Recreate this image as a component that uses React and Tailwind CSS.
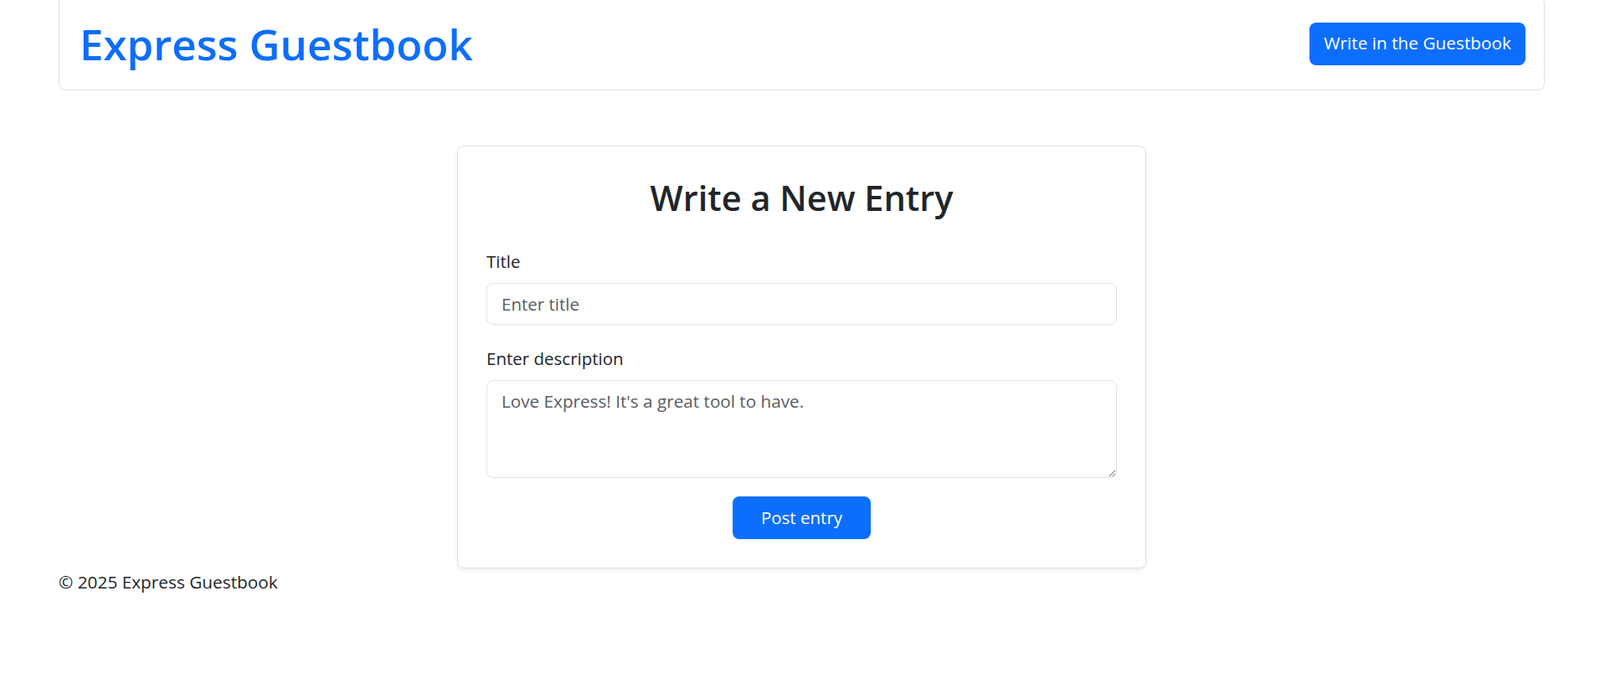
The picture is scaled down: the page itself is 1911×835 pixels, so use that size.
import React from "react";

/* -------------------- GUESTBOOK: NEW ENTRY -------------------- */

const FONT = { fontFamily: '"Open Sans", "Noto Sans", sans-serif' };

const Header = () => (
  <div className="flex items-center justify-between h-[112px] -mt-[4px] pl-6 pr-[22px] border border-[#dee2e6] rounded-[8px] bg-white">
    <h1 className="text-[51px] leading-[1.2] font-semibold text-[#0d6efd] pt-[2px]">
      Express Guestbook
    </h1>
    <button className="h-[51px] px-[17px] rounded-[8px] bg-[#0d6efd] text-white text-[20.8px]">
      Write in the Guestbook
    </button>
  </div>
);

const EntryForm = () => (
  <div className="w-[823px] mx-auto mt-[66px] px-[34px] pt-[36px] pb-[34px] bg-white border border-[#dee2e6] rounded-[8px] shadow-[0_2px_5px_rgba(0,0,0,0.08)]">
    <h2 className="text-center text-[41.5px] leading-[50px] font-semibold text-[#212529]">
      Write a New Entry
    </h2>

    <label className="block mt-[36px] text-[20.5px] leading-[30px] text-[#212529]">
      Title
    </label>
    <input
      type="text"
      placeholder="Enter title"
      className="block w-full h-[50px] mt-[11px] px-[17px] border border-[#dee2e6] rounded-[8px] text-[20.5px] text-[#212529] placeholder:text-[#595c5f] outline-none"
    />

    <label className="block mt-[25px] text-[20.5px] leading-[30px] text-[#212529]">
      Enter description
    </label>
    <textarea
      rows={3}
      placeholder="Love Express! It's a great tool to have."
      className="block w-full h-[117px] mt-[11px] px-[17px] py-[9px] border border-[#dee2e6] rounded-[8px] text-[20.7px] leading-[30px] text-[#212529] placeholder:text-[#595c5f] outline-none"
    />

    <div className="flex justify-center mt-[22px]">
      <button className="w-[165px] h-[51px] rounded-[8px] bg-[#0d6efd] text-white text-[20.5px]">
        Post entry
      </button>
    </div>
  </div>
);

export default function App() {
  return (
    <div style={FONT} className="min-h-screen bg-white pl-[70px] pr-[66px] text-[#212529]">
      <Header />
      <EntryForm />

      {/* Footer */}
      <footer className="pt-[1px] text-[20.8px] leading-[30px] text-[#212529]">
        © 2025 Express Guestbook
      </footer>
    </div>
  );
}
